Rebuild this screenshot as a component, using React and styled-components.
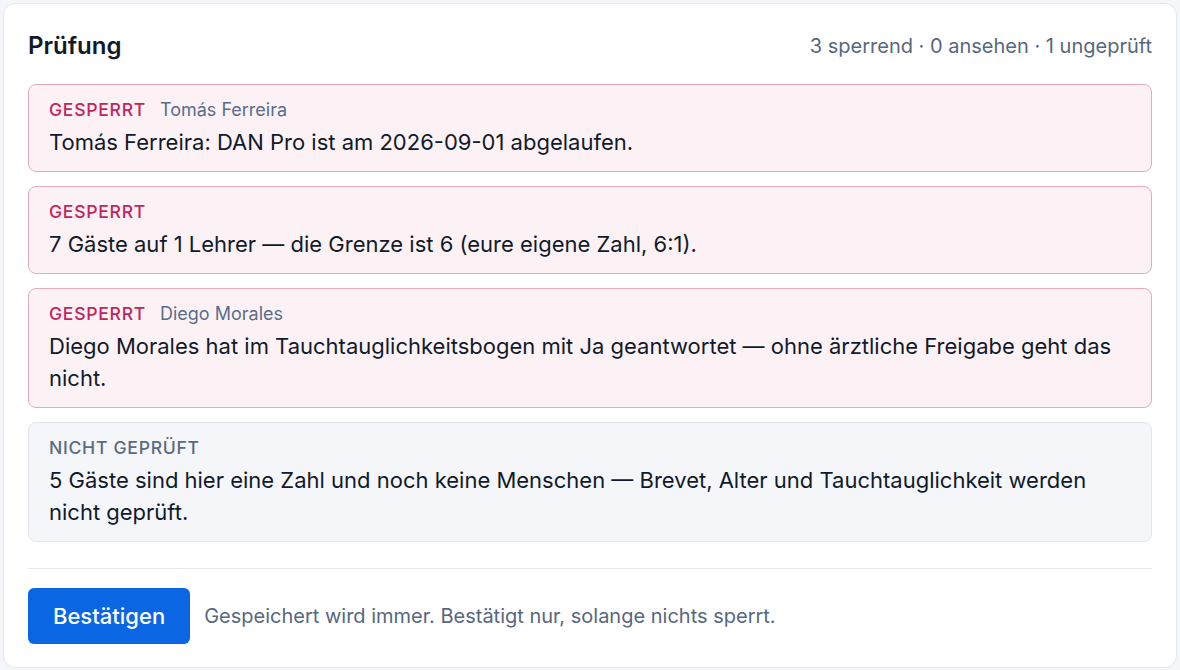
import React from "react";
import styled, { createGlobalStyle } from "styled-components";

const GlobalStyle = createGlobalStyle`
  html, body {
    margin: 0;
    padding: 0;
    background: #f4f6f9;
  }
  body {
    padding: 3px;
    font-family: Inter, "Noto Sans", "Liberation Sans", sans-serif;
    color: #0f1b2d;
  }
`;

const checks = [
  {
    kind: "block",
    who: "Tomás Ferreira",
    text: "Tomás Ferreira: DAN Pro ist am 2026-09-01 abgelaufen.",
  },
  {
    kind: "block",
    text: "7 Gäste auf 1 Lehrer — die Grenze ist 6 (eure eigene Zahl, 6:1).",
  },
  {
    kind: "block",
    who: "Diego Morales",
    text: "Diego Morales hat im Tauchtauglichkeitsbogen mit Ja geantwortet — ohne ärztliche Freigabe geht das nicht.",
  },
  {
    kind: "unchecked",
    text: "5 Gäste sind hier eine Zahl und noch keine Menschen — Brevet, Alter und Tauchtauglichkeit werden nicht geprüft.",
  },
];

export default function App() {
  return (
    <>
      <GlobalStyle />
      <Card>
        <Header>
          <Title>Prüfung</Title>
          <Summary>3 sperrend · 0 ansehen · 1 ungeprüft</Summary>
        </Header>
        <List>
          {checks.map((c, i) => (
            <Item key={i} $kind={c.kind}>
              <Meta>
                <Tag $kind={c.kind}>
                  {c.kind === "block" ? "Gesperrt" : "Nicht geprüft"}
                </Tag>
                {c.who && <Who>{c.who}</Who>}
              </Meta>
              <Message>{c.text}</Message>
            </Item>
          ))}
        </List>
        <Footer>
          <Button>Bestätigen</Button>
          <Hint>Gespeichert wird immer. Bestätigt nur, solange nichts sperrt.</Hint>
        </Footer>
      </Card>
    </>
  );
}

const Card = styled.div`
  background: #fff;
  border: 1px solid #e3e7ee;
  border-radius: 12px;
  padding: 26px 24px 23px;
  width: 1124px;
  box-sizing: content-box;
`;

const Header = styled.div`
  display: flex;
  align-items: center;
  justify-content: space-between;
  margin-bottom: 22px;
`;

const Title = styled.h2`
  margin: 0;
  font-size: 24px;
  line-height: 32px;
  font-weight: 600;
  color: #101a2b;
`;

const Summary = styled.div`
  font-size: 20px;
  color: #56677f;
`;

const List = styled.div`
  display: flex;
  flex-direction: column;
  gap: 14px;
`;

const Item = styled.div`
  border: 1px solid ${(p) => (p.$kind === "block" ? "#e5abbd" : "#e2e6ec")};
  background: ${(p) => (p.$kind === "block" ? "#fcf2f5" : "#f4f6f9")};
  border-radius: 8px;
  padding: 13px 20px 13px;
`;

const Meta = styled.div`
  display: flex;
  align-items: baseline;
  gap: 14px;
  line-height: 24px;
  margin-bottom: 4px;
`;

const Tag = styled.span`
  font-size: 17.6px;
  font-weight: 500;
  letter-spacing: 0.04em;
  text-transform: uppercase;
  color: ${(p) => (p.$kind === "block" ? "#c2255c" : "#5a6a82")};
`;

const Who = styled.span`
  font-size: 18px;
  color: #5a6d8a;
`;

const Message = styled.div`
  font-size: 22px;
  line-height: 32px;
  color: #111a2a;
`;

const Footer = styled.div`
  display: flex;
  align-items: center;
  gap: 14px;
  margin-top: 26px;
  padding-top: 19px;
  border-top: 1px solid #e3e7ee;
`;

const Button = styled.button`
  height: 56px;
  padding: 0 25px;
  border: none;
  border-radius: 6px;
  background: #0b66e4;
  color: #fff;
  font-family: inherit;
  font-size: 22px;
  font-weight: 500;
  cursor: pointer;
`;

const Hint = styled.span`
  font-size: 20px;
  color: #56677f;
`;
